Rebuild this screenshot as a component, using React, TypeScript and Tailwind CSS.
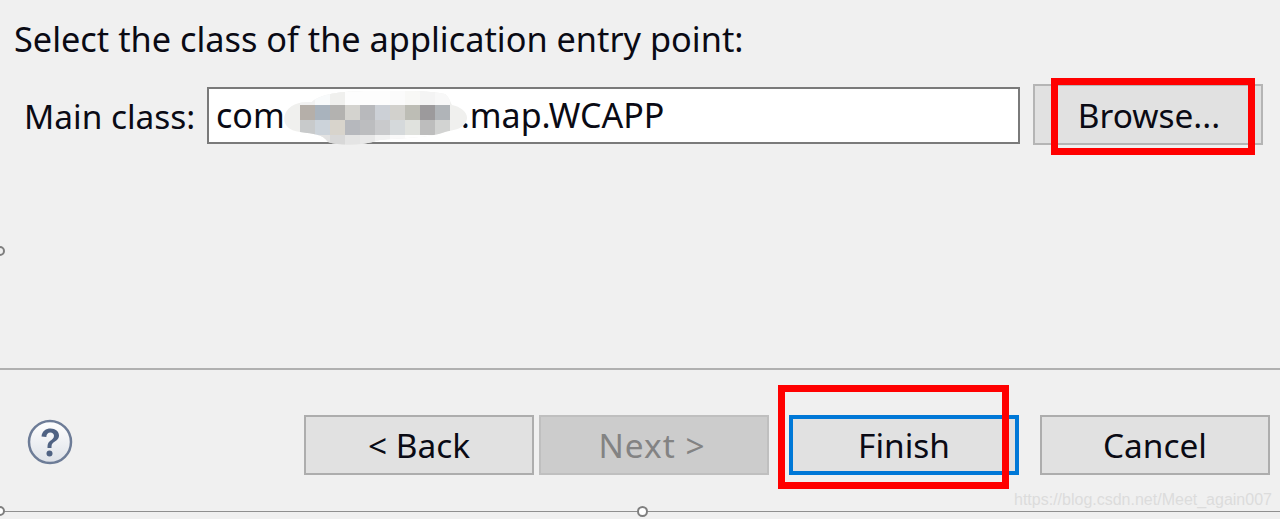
// App.tsx
const font = "font-['Noto_Sans','Open_Sans',sans-serif]"

const mosaic: string[][] = [
    ['#f2f2f2', '#f8fafb', '#f0f0ee', '#fdfdfd', '#fdfdfd', '#fdfdfd', '#fbfbfb', '#f8f8f6', '#f4f4f4', '#f8f8f8'],
    ['#b5afa9', '#a9b3bd', '#b3b2b0', '#d4d3cf', '#b8b9bc', '#ccd0d6', '#d2d1cd', '#bdbdb5', '#9c9a9c', '#b0b4b8'],
    ['#c8cacb', '#ccd3da', '#d8d4cc', '#b6b8bd', '#bcbdbf', '#c9cacc', '#d5d9db', '#e0e2de', '#bdbdbd', '#d2d3d2'],
    ['#e0e2e2', '#e2e2e2', '#d8d8d8', '#e4e4e4', '#e8e8e8', '#f2f2f2', '#fafafa', '#ffffff', '#ffffff', '#ffffff'],
]

function Blur() {
    return (
        <svg className="absolute left-[280px] top-[90px]" width="190" height="56" viewBox="0 0 190 56">
            <defs>
                <clipPath id="blob">
                    <path d="M6 22C12 12 24 12 32 12C40 4 60 1 90 1C120 1 150 0 165 4C170 8 170 12 172 15C182 17 190 24 186 32C182 40 172 40 165 42C150 48 120 48 100 50C80 56 60 56 48 52C42 44 34 44 20 42C4 40 2 30 6 22Z" />
                </clipPath>
            </defs>
            <g clipPath="url(#blob)">
                <rect width="190" height="56" fill="#f0f0ee" />
                {mosaic.map((row, r) =>
                    row.map((c, i) => (
                        <rect key={`${r}-${i}`} x={20 + i * 15} y={r === 0 ? 0 : r * 15} width="15" height="15" fill={c} />
                    ))
                )}
            </g>
        </svg>
    )
}

function Btn({ label, disabled, focused }: { label: string; disabled?: boolean; focused?: boolean }) {
    const tone = disabled
        ? 'bg-[#cccccc] border-[2px] border-[#bfbfbf] text-[#838383] tracking-[1px] pr-[4px]'
        : focused
            ? 'bg-[#e1e1e1] border-[4px] border-[#0078d7] text-[#0a0a14]'
            : 'bg-[#e1e1e1] border-[2px] border-[#adadad] text-[#0a0a14]'

    return (
        <div className={`w-[230px] h-[60px] flex items-center justify-center text-[33.4px] ${tone}`}>
            {label}
        </div>
    )
}

export default function App() {
    return (
        <div className={`${font} relative w-[1280px] h-[519px] overflow-hidden bg-[#f0f0f0] text-[#0a0a14] flex flex-col`}>
            <div className="h-[370px] border-b-[2px] border-[#b0b0b0] flex flex-col shrink-0">
                <div className="pl-[14px] pt-[15px] text-[34.3px] leading-[48px] whitespace-nowrap">
                    Select the class of the application entry point:
                </div>
                <div className="flex items-start mt-[21px] pl-[24px]">
                    <div className="mt-[3px] w-[183px] text-[33.4px] leading-[58px] whitespace-nowrap">Main class:</div>
                    <div className="mt-[3px] w-[813px] h-[57px] bg-white border-[2px] border-[#7a7a7a] pl-[7px] flex items-center text-[34px] whitespace-nowrap">
                        <span>com</span>
                        <span className="w-[176px] shrink-0" />
                        <span>.map.WCAPP</span>
                    </div>
                    <div className="ml-[13px] w-[230px] h-[61px] bg-[#e1e1e1] border-[2px] border-[#b5b5b5] flex items-center justify-center pl-[2px] pt-[2px] text-[33.4px]">
                        Browse...
                    </div>
                </div>
            </div>

            <div className="flex items-start h-[142px] shrink-0 border-b border-[#8f8f8f] pt-[45px] pl-[27px]">
                <svg width="46" height="46" viewBox="0 0 46 46" className="mt-[4px]">
                    <defs>
                        <linearGradient id="help" x1="0" y1="0" x2="0" y2="1">
                            <stop offset="0" stopColor="#ffffff" />
                            <stop offset="1" stopColor="#dde1e8" />
                        </linearGradient>
                    </defs>
                    <circle cx="23" cy="23" r="21" fill="url(#help)" stroke="#6d7c97" strokeWidth="2.5" />
                    <path d="M14.5 17.5C15 12 19 9.5 23.5 9.5C28.5 9.5 32 12.5 32 16.5C32 21 28 22 25.5 24.5C24.5 25.5 24.5 27 24.5 29H20.5C20.5 26 20.5 24 23 22C25 20.5 27 19.5 27 16.8C27 14.8 25.5 13.5 23.3 13.5C21 13.5 19.5 15 19.3 18Z" fill="#4f6283" />
                    <circle cx="22.5" cy="34.5" r="3" fill="#4f6283" />
                </svg>
                <div className="ml-[231px] flex">
                    <Btn label="< Back" />
                    <div className="w-[5px]" />
                    <Btn label="Next >" disabled />
                    <div className="w-[20px]" />
                    <Btn label="Finish" focused />
                    <div className="w-[21px]" />
                    <Btn label="Cancel" />
                </div>
            </div>

            <Blur />

            {/* red annotation boxes */}
            <div className="absolute left-[1051px] top-[78px] w-[204px] h-[77px] border-[7px] border-[#ff0000]" />
            <div className="absolute left-[778px] top-[385px] w-[231px] h-[104px] border-[7px] border-[#ff0000]" />

            {/* selection handles */}
            <div className="absolute left-[-5px] top-[246px] w-[10px] h-[10px] rounded-full border-[2px] border-[#7f7f7f] bg-[#f0f0f0]" />
            <div className="absolute left-[-5px] top-[506px] w-[10px] h-[10px] rounded-full border-[2px] border-[#7f7f7f] bg-white" />
            <div className="absolute left-[637px] top-[506px] w-[11px] h-[11px] rounded-full border-[2px] border-[#7f7f7f] bg-white" />

            <div className="absolute left-[1014px] top-[489px] text-[16px] leading-[22px] text-[#dcdcdc] font-['Liberation_Sans',sans-serif] whitespace-nowrap">
                https://blog.csdn.net/Meet_again007
            </div>
        </div>
    )
}
